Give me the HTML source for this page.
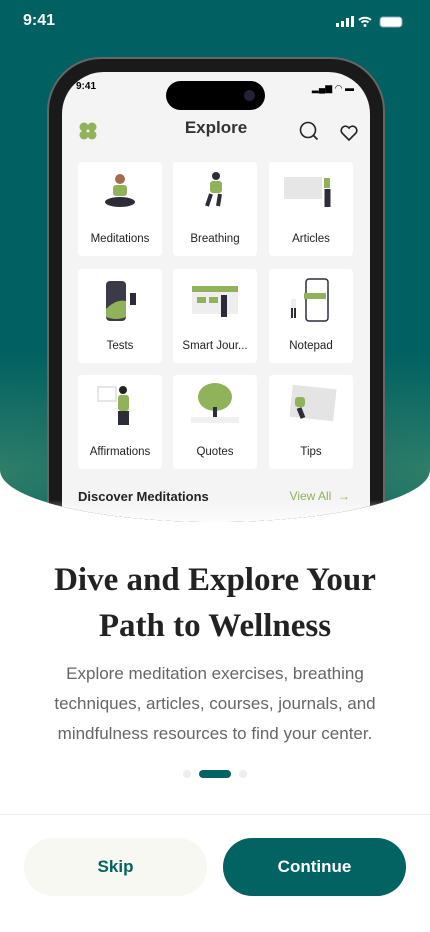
<!DOCTYPE html>
<html><head><meta charset="utf-8"><style>
*{margin:0;padding:0;box-sizing:border-box}
body{width:430px;height:932px;background:#fff;font-family:"Liberation Sans",sans-serif;position:relative;overflow:hidden}
.top{position:absolute;left:0;top:0;width:430px;height:522px;overflow:hidden;border-radius:0 0 50% 50%/0 0 52px 52px;
background:radial-gradient(ellipse 260px 120px at 0 470px,#2e7d68 0%,rgba(46,125,104,0) 100%),radial-gradient(ellipse 260px 120px at 430px 470px,#2e7d68 0%,rgba(46,125,104,0) 100%),#016061}
.sb{position:absolute;top:12px;left:23px;color:#fff;font-weight:bold;font-size:16px}
.phone{position:absolute;left:47px;top:57px;width:338px;height:520px;border-radius:54px;background:#1a1a1a;border:2px solid #666}
.screen{position:absolute;left:13px;top:13px;width:308px;height:520px;border-radius:42px;background:#f4f4f4;overflow:hidden}
.island{position:absolute;left:104px;top:9px;width:99px;height:29px;border-radius:15px;background:#000}
.card{position:absolute;width:84px;height:94px;background:#fff;border-radius:4px}
.card span{position:absolute;left:0;right:0;top:71px;text-align:center;font-size:11.5px;color:#222}
.fade{position:absolute;left:0;right:0;top:500px;height:22px;background:linear-gradient(rgba(255,255,255,0),rgba(255,255,255,.8))}
h1{position:absolute;top:557px;left:0;right:0;text-align:center;font-family:"Liberation Serif",serif;font-weight:bold;font-size:33px;line-height:46px;color:#222}
p{position:absolute;top:659px;left:38px;right:38px;text-align:center;font-size:17px;line-height:30px;color:#666}
.btn{position:absolute;top:838px;height:58px;width:183px;border-radius:29px;text-align:center;line-height:58px;font-weight:bold;font-size:17px}
</style></head><body>
<div class="top">
<div class="sb">9:41</div>
<svg style="position:absolute;left:336px;top:16px" width="70" height="12"><rect x="0" y="7" width="3" height="4" fill="#fff"/><rect x="5" y="5" width="3" height="6" fill="#fff"/><rect x="10" y="2" width="3" height="9" fill="#fff"/><rect x="15" y="0" width="3" height="11" fill="#fff"/><path d="M23 4a9 9 0 0 1 12 0M25.5 6.5a5 5 0 0 1 7 0" stroke="#fff" stroke-width="2" fill="none"/><circle cx="29" cy="9.5" r="1.5" fill="#fff"/><rect x="44" y="1" width="22" height="10" rx="3" fill="#fff" stroke="#8ab" /></svg>
<div class="phone"><div class="screen">
<div style="position:absolute;left:14px;top:9px;font-size:10px;font-weight:bold">9:41</div>
<div class="island"><div style="position:absolute;right:10px;top:9px;width:11px;height:11px;border-radius:50%;background:#223"></div></div>
<div style="position:absolute;right:16px;top:11px;font-size:9px">▂▄▆ ◠ ▬</div>
<svg style="position:absolute;left:17px;top:50px" width="18" height="18"><circle cx="5" cy="5" r="4.5" fill="#8fb25a"/><circle cx="13" cy="5" r="4.5" fill="#8fb25a"/><circle cx="5" cy="13" r="4.5" fill="#8fb25a"/><circle cx="13" cy="13" r="4.5" fill="#8fb25a"/></svg>
<div style="position:absolute;left:0;right:0;top:46px;text-align:center;font-size:17px;font-weight:bold;color:#333">Explore</div>
<svg style="position:absolute;left:237px;top:49px" width="60" height="22"><circle cx="9" cy="9" r="7.5" stroke="#222" stroke-width="1.6" fill="none"/><path d="M14.5 14.5l4 4" stroke="#222" stroke-width="1.6"/><path d="M50 19l-7-7a4 4 0 0 1 7-5a4 4 0 0 1 7 5z" stroke="#222" stroke-width="1.6" fill="none"/></svg>
<div class="card" style="left:16px;top:90px"><svg width="84" height="60"><circle cx="42" cy="17" r="5" fill="#a56a4f"/><rect x="35" y="23" width="14" height="11" rx="3" fill="#8fb25a"/><ellipse cx="42" cy="40" rx="15" ry="5" fill="#2d2d3a"/></svg><span>Meditations</span></div>
<div class="card" style="left:111px;top:90px"><svg width="84" height="60"><circle cx="43" cy="14" r="4" fill="#2d2d3a"/><rect x="37" y="19" width="12" height="12" rx="3" fill="#8fb25a"/><path d="M38 32l-4 12M47 32l-2 12" stroke="#2d2d3a" stroke-width="4"/></svg><span>Breathing</span></div>
<div class="card" style="left:207px;top:90px"><svg width="84" height="60"><rect x="15" y="15" width="38" height="22" fill="#e6e6e6"/><rect x="55" y="16" width="6" height="10" fill="#8fb25a"/><path d="M57 27v18M60 27v18" stroke="#2d2d3a" stroke-width="3"/></svg><span>Articles</span></div>
<div class="card" style="left:16px;top:197px"><svg width="84" height="60"><rect x="28" y="12" width="20" height="40" rx="4" fill="#3a3a48"/><path d="M28 40q10-10 20-8v16q-10 4-20 0z" fill="#8fb25a"/><rect x="52" y="24" width="6" height="12" fill="#2d2d3a"/></svg><span>Tests</span></div>
<div class="card" style="left:111px;top:197px"><svg width="84" height="60"><rect x="19" y="17" width="46" height="28" fill="#eee"/><rect x="19" y="17" width="46" height="6" fill="#8fb25a"/><rect x="24" y="28" width="9" height="6" fill="#8fb25a"/><rect x="36" y="28" width="9" height="6" fill="#8fb25a"/><rect x="48" y="26" width="6" height="22" fill="#2d2d3a"/></svg><span>Smart Jour...</span></div>
<div class="card" style="left:207px;top:197px"><svg width="84" height="60"><rect x="37" y="10" width="22" height="42" rx="3" fill="#fff" stroke="#2d2d3a" stroke-width="1.5"/><rect x="35" y="24" width="22" height="6" fill="#8fb25a"/><rect x="22" y="30" width="5" height="9" fill="#eee"/><path d="M23 39v10M26 39v10" stroke="#2d2d3a" stroke-width="2"/></svg><span>Notepad</span></div>
<div class="card" style="left:16px;top:303px"><svg width="84" height="60"><rect x="20" y="12" width="18" height="14" fill="#fff" stroke="#ccc"/><rect x="40" y="20" width="11" height="16" rx="3" fill="#8fb25a"/><circle cx="45" cy="15" r="4" fill="#222"/><rect x="40" y="36" width="11" height="14" fill="#2d2d3a"/></svg><span>Affirmations</span></div>
<div class="card" style="left:111px;top:303px"><svg width="84" height="60"><ellipse cx="42" cy="22" rx="17" ry="14" fill="#8fb25a"/><rect x="40" y="32" width="4" height="14" fill="#2d2d3a"/><rect x="18" y="42" width="48" height="6" fill="#f0f0f0"/></svg><span>Quotes</span></div>
<div class="card" style="left:207px;top:303px"><svg width="84" height="60"><rect x="22" y="12" width="44" height="32" fill="#e4e4e4" transform="rotate(6 44 28)"/><rect x="26" y="22" width="10" height="10" rx="3" fill="#8fb25a"/><path d="M30 33l4 10" stroke="#2d2d3a" stroke-width="5"/></svg><span>Tips</span></div>
<div style="position:absolute;left:16px;top:417px;font-size:13px;font-weight:bold;color:#222">Discover Meditations</div>
<div style="position:absolute;right:20px;top:417px;font-size:12px;color:#8fb25a">View All &nbsp;→</div>
</div></div>
<div class="fade"></div>
</div>
<h1>Dive and Explore Your<br>Path to Wellness</h1>
<p>Explore meditation exercises, breathing techniques, articles, courses, journals, and mindfulness resources to find your center.</p>
<div style="position:absolute;left:183px;top:770px;width:8px;height:8px;border-radius:4px;background:#eee"></div>
<div style="position:absolute;left:199px;top:770px;width:32px;height:8px;border-radius:4px;background:#036262"></div>
<div style="position:absolute;left:239px;top:770px;width:8px;height:8px;border-radius:4px;background:#eee"></div>
<div style="position:absolute;left:0;right:0;top:814px;height:1px;background:#eee"></div>
<div class="btn" style="left:24px;background:#f6f8f1;color:#036262">Skip</div>
<div class="btn" style="left:223px;background:#036262;color:#fff">Continue</div>
</body></html>
